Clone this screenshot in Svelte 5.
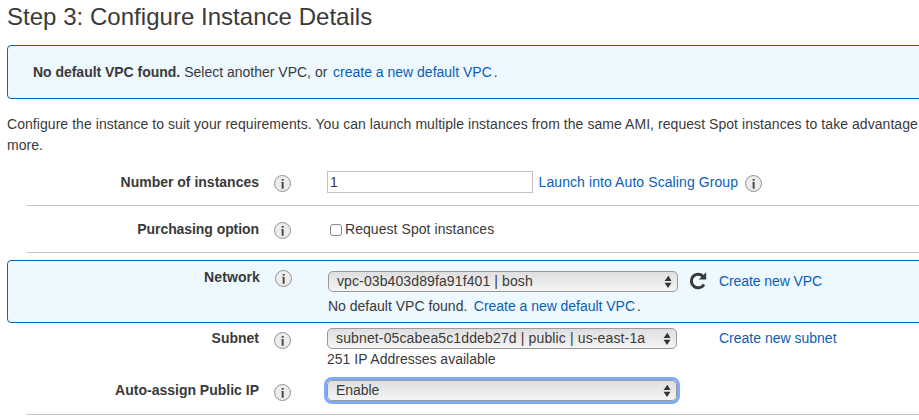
<script>
  const network = 'vpc-03b403d89fa91f401 | bosh';
  const subnet = 'subnet-05cabea5c1ddeb27d | public | us-east-1a';
</script>

{#snippet info()}
  <svg class="info" width="17" height="17" viewBox="0 0 17 17">
    <circle cx="8.5" cy="8.5" r="8" fill="#ececec" stroke="#929292" />
    <path d="M7.7 4h1.9v1.8H7.7zM7.3 7h2.3v6.7H7.7V7.8h-.4z" fill="#444" />
  </svg>
{/snippet}

{#snippet select(value, spacing, focused)}
  <div class="select" class:focused>
    <span style="letter-spacing: {spacing}px">{value}</span>
    <svg width="8" height="14" viewBox="0 0 8 14">
      <path d="M4.4.8 7.5 5.9H.6zM.6 7.8h6.9L4 12.9z" fill="#333" />
    </svg>
  </div>
{/snippet}

<main>
  <h1>Step 3: Configure Instance Details</h1>
  <div class="alert">
    <b>No default VPC found.</b><span class="select-text">Select another VPC, or</span><a>create a new default VPC</a><span class="dot">.</span>
  </div>
  <p>
    <span>Configure the instance to suit your requirements. You can launch multiple instances from the same AMI, request Spot instances to take advantage</span><br />more.
  </p>

  <section class="row count">
    <div class="label"><b>Number of instances</b></div>
    {@render info()}
    <div class="field">
      <div class="input">1</div>
      <a class="launch">Launch into Auto Scaling Group</a>
      {@render info()}
    </div>
  </section>

  <section class="row purchase">
    <div class="label"><b>Purchasing option</b></div>
    {@render info()}
    <div class="field"><i class="check"></i><span class="spot">Request Spot instances</span></div>
  </section>

  <section class="row network">
    <div class="label"><b>Network</b></div>
    {@render info()}
    <div class="stack">
      <div class="field">
        {@render select(network, 0.11, false)}
        <svg class="refresh" width="20" height="20" viewBox="0 0 20 20">
          <path d="M15 5.2A6.8 6.8 0 1 0 16 13.4" fill="none" stroke="#3a3a3a" stroke-width="3" />
          <path d="M18.2 1.2v7.2h-7.4z" fill="#3a3a3a" />
        </svg>
        <a class="create">Create new VPC</a>
      </div>
      <div class="hint"><span>No default VPC found.</span><a>Create a new default VPC</a><span class="dot">.</span></div>
    </div>
  </section>

  <section class="row subnet">
    <div class="label"><b>Subnet</b></div>
    {@render info()}
    <div class="stack">
      <div class="field">
        {@render select(subnet, 0.135, false)}
        <a class="create">Create new subnet</a>
      </div>
      <div class="hint">251 IP Addresses available</div>
    </div>
  </section>

  <section class="row assign">
    <div class="label"><b>Auto-assign Public IP</b></div>
    {@render info()}
    <div class="field">{@render select('Enable', -0.05, true)}</div>
  </section>
</main>

<style>
  :global(body) { background: #fff; }
  main {
    width: 919px;
    height: 420px;
    overflow: hidden;
    box-sizing: border-box;
    padding-left: 7px;
    font: 14px/21px "Liberation Sans", Arial, sans-serif;
    color: #3a3a3a;
    white-space: nowrap;
  }
  h1 { margin: 0; height: 45px; font-size: 24px; line-height: 34px; font-weight: 400; letter-spacing: 0.03px; }
  a { color: #0b5eb5; }
  .alert, .network {
    box-sizing: border-box;
    width: 930px;
    border: 1px solid #0f62ae;
    border-radius: 4px;
    background: #edf8ff;
  }
  .alert { display: flex; align-items: center; height: 54px; padding-left: 25px; }
  .alert b { letter-spacing: -0.03px; }
  .select-text { margin: 0 5.7px 0 4px; }
  .dot { margin-left: 2px; }
  p { margin: 15px 0 0; height: 47px; letter-spacing: 0.057px; }
  .row { display: flex; align-items: flex-start; }
  .count, .purchase, .assign { margin-left: 20px; width: 900px; box-sizing: border-box; border-bottom: 1px solid #c4c4c4; }
  .label { width: 232px; text-align: right; flex: none; }
  .info { flex: none; margin: 3px 36px 0 15px; }
  .field { display: flex; align-items: center; }
  .count { height: 45px; padding-top: 11px; }
  .count .field { height: 22px; margin-top: -1px; }
  .input { box-sizing: border-box; width: 206px; height: 22px; line-height: 21px; padding-left: 2px; border: 1px solid #c2c2c2; margin-right: 5.5px; }
  .launch { letter-spacing: 0.09px; }
  .field .info { margin: 3px 0 0 7px; }
  .purchase { height: 47px; padding-top: 13px; }
  .purchase .label { letter-spacing: -0.07px; }
  .check { box-sizing: border-box; width: 12px; height: 12px; margin: 1px 3px 0; border: 1px solid #888; border-radius: 3px; background: #fff; }
  .spot { letter-spacing: 0.06px; }
  .purchase .field { height: 21px; }
  .network { margin-top: 7px; height: 63px; padding: 6px 0 0 20px; }
  .network .label { letter-spacing: 0.1px; }
  .network .stack { padding-top: 4px; }
  .network .field { height: 21px; }
  .network .create { letter-spacing: -0.09px; }
  .select {
    box-sizing: border-box;
    display: flex;
    justify-content: space-between;
    align-items: center;
    width: 350px;
    height: 21px;
    padding: 0 5px 0 8px;
    border: 1px solid #999;
    border-radius: 5px;
    background: linear-gradient(#dfdfdf, #f4f4f4);
    line-height: 19px;
  }
  .focused { box-shadow: 0 0 0 3px #7eacf4; }
  .refresh { margin: -2px 11px 0 10px; flex: none; }
  .hint { display: flex; line-height: 20px; }
  .network .hint { margin-top: 4px; }
  .network .hint a { margin-left: 6.5px; letter-spacing: -0.03px; }
  .subnet { height: 52px; margin-left: 20px; padding-top: 5px; box-sizing: border-box; }
  .subnet .create { margin-left: 42px; }
  .subnet .info { margin-top: 4px; }
  .assign { height: 40px; padding-top: 5px; }
  .assign .info { margin-top: 4px; }
</style>
